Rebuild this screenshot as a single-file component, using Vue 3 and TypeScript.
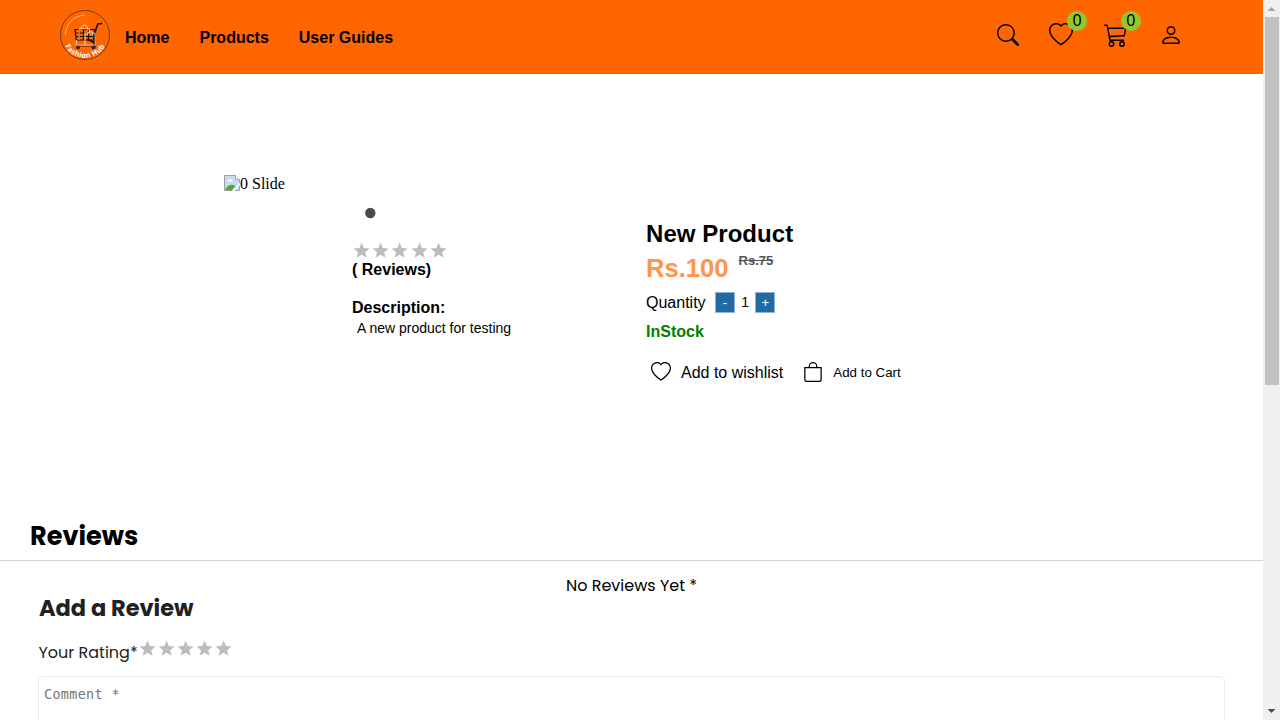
<script setup lang="ts">
import { ref } from 'vue'

const links: string[] = ['Home', 'Products', 'User Guides']
const stars: number[] = [1, 2, 3, 4, 5]
const quantity = ref(1)

const starPath = 'M12 17.27L18.18 21l-1.64-7.03L22 9.24l-7.19-.61L12 2 9.19 8.63 2 9.24l5.46 4.73L5.82 21z'
const heartPath = 'm8 2.748-.717-.737C5.6.281 2.514.878 1.4 3.053c-.523 1.023-.641 2.5.314 4.385.92 1.815 2.834 3.989 6.286 6.357 3.452-2.368 5.365-4.542 6.286-6.357.955-1.886.838-3.362.314-4.385C13.486.878 10.4.28 8.717 2.01L8 2.748zM8 15C-7.333 4.868 3.279-3.04 7.824 1.143c.06.055.119.112.176.171a3.12 3.12 0 0 1 .176-.17C12.72-3.042 23.333 4.867 8 15z'
const searchPath = 'M11.742 10.344a6.5 6.5 0 1 0-1.397 1.398h-.001c.03.04.062.078.098.115l3.85 3.85a1 1 0 0 0 1.415-1.414l-3.85-3.85a1.007 1.007 0 0 0-.115-.1zM12 6.5a5.5 5.5 0 1 1-11 0 5.5 5.5 0 0 1 11 0z'
const cartPath = 'M0 1.5A.5.5 0 0 1 .5 1H2a.5.5 0 0 1 .485.379L2.89 3H14.5a.5.5 0 0 1 .49.598l-1 5a.5.5 0 0 1-.465.401l-9.397.472L4.415 11H13a.5.5 0 0 1 0 1H4a.5.5 0 0 1-.491-.408L2.01 3.607 1.61 2H.5a.5.5 0 0 1-.5-.5zM3.102 4l.84 4.479 9.144-.459L13.89 4H3.102zM5 12a2 2 0 1 0 0 4 2 2 0 0 0 0-4zm7 0a2 2 0 1 0 0 4 2 2 0 0 0 0-4zm-7 1a1 1 0 1 1 0 2 1 1 0 0 1 0-2zm7 0a1 1 0 1 1 0 2 1 1 0 0 1 0-2z'
const personPath = 'M8 8a3 3 0 1 0 0-6 3 3 0 0 0 0 6zm2-3a2 2 0 1 1-4 0 2 2 0 0 1 4 0zm4 8c0 1-1 1-1 1H3s-1 0-1-1 1-4 6-4 6 3 6 4zm-1-.004c-.001-.246-.154-.986-.832-1.664C11.516 10.68 10.289 10 8 10c-2.29 0-3.516.68-4.168 1.332-.678.678-.83 1.418-.832 1.664h10z'
const bagPath = 'M8 1a2.5 2.5 0 0 1 2.5 2.5V4h-5v-.5A2.5 2.5 0 0 1 8 1zm3.5 3v-.5a3.5 3.5 0 1 0-7 0V4H1v10a2 2 0 0 0 2 2h10a2 2 0 0 0 2-2V4h-3.5zM2 5h12v9a1 1 0 0 1-1 1H3a1 1 0 0 1-1-1V5z'
</script>

<template>
  <div class="window">
    <div class="page">
      <header class="header">
        <svg class="logo" viewBox="0 0 50 50">
          <defs><path id="logoArc" d="M2.8 30A22.7 22.7 0 0 0 47.2 30" /></defs>
          <circle cx="25" cy="25" r="24.5" fill="none" stroke="#5a3a20" stroke-width=".9" />
          <path d="M5.4 25A19.8 19.8 0 0 1 24.5 5.2" fill="none" stroke="#ffc9a0" stroke-width=".8" />
          <g fill="none" stroke="#1c0e06">
            <path d="M42.3 13.5L37.8 14L35.5 20.5L34.6 34L31 30" stroke-width="1.6" />
            <path d="M15 19.5H34.5L33.5 30H16.2ZM15.5 23H33M16 26.5H33M19.5 19.5V30M23.5 19.5V30M28.5 19.5V30" stroke-width="1.2" />
            <path d="M27 29.5L33.5 32" stroke-width="1.8" />
            <path d="M16.5 36H36" stroke-width=".9" />
          </g>
          <g fill="none" stroke="#ffeadb" stroke-width=".8">
            <path d="M16.5 30V35.2H35.2V23H25V35M19.2 18.5V30M19.2 18.8H29.5V23" />
            <path d="M21 20C21 13.5 28 13.5 28 20M27.5 25C27.5 19.8 32.5 19.8 32.5 25" />
          </g>
          <circle cx="18" cy="37.4" r="2" fill="#4a2108" />
          <circle cx="33.5" cy="37.4" r="2" fill="#4a2108" />
          <text class="logo-text"><textPath href="#logoArc" startOffset="50%" text-anchor="middle">Fashion Hub</textPath></text>
        </svg>
        <nav class="nav"><a v-for="l in links" :key="l">{{ l }}</a></nav>
        <div class="tools">
          <svg class="search" viewBox="0 0 16 16"><path :d="searchPath" /></svg>
          <span class="tool wish"><svg viewBox="0 0 16 16"><path :d="heartPath" /></svg><b class="badge">0</b></span>
          <span class="tool cart"><svg viewBox="0 0 16 16"><path :d="cartPath" /></svg><b class="badge">0</b></span>
          <span class="tool user"><svg viewBox="0 0 16 16"><path :d="personPath" /></svg></span>
        </div>
      </header>

      <section class="product">
        <div class="media">
          <div class="slide">
            <svg viewBox="0 0 16 16">
              <path d="M.5 .5H11.5L15.5 4.5V15.5H.5Z" fill="#c6d9f5" stroke="#a0a0a0" />
              <path d="M11.5 .5V4.5H15.5" fill="#fff" stroke="#a0a0a0" />
              <path d="M3 6.5C3 4.5 5 4.5 5.3 5C6 3.3 8 4.2 7.7 5.3C9 5.3 9 6.5 8.5 6.5Z" fill="#fff" />
              <path d="M1 15C3 10.5 7 8 11.5 11L8 15Z" fill="#4faa35" />
              <path d="M8 16L16 7.5V10L10.5 16Z" fill="#fff" />
            </svg><span>0 Slide</span>
          </div>
          <svg class="dot" viewBox="0 0 12 12"><circle cx="6.3" cy="6" r="5.2" fill="#4a4a4a" /></svg>
          <div class="details">
            <div class="stars"><svg v-for="s in stars" :key="s" viewBox="0 0 24 24"><path :d="starPath" /></svg></div>
            <h4 class="count">( Reviews)</h4>
            <h4 class="label">Description:</h4>
            <p class="description">A new product for testing</p>
          </div>
        </div>

        <div class="info">
          <h2>New Product</h2>
          <div class="prices"><strong>Rs.100</strong><s>Rs.75</s></div>
          <div class="quantity">
            <span>Quantity</span>
            <button @click="quantity = Math.max(1, quantity - 1)">-</button>
            <em>{{ quantity }}</em>
            <button @click="quantity++">+</button>
          </div>
          <div class="stock">InStock</div>
          <div class="actions">
            <svg viewBox="0 0 16 16"><path :d="heartPath" /></svg><span class="add-wish">Add to wishlist</span>
            <svg viewBox="0 0 16 16"><path :d="bagPath" /></svg><span class="add-cart">Add to Cart</span>
          </div>
        </div>
      </section>

      <section class="reviews">
        <h2 class="reviews-title">Reviews</h2>
        <p class="empty">No Reviews Yet *</p>
        <h3 class="add-title">Add a Review</h3>
        <div class="rating">
          <span>Your Rating*</span>
          <div class="stars"><svg v-for="s in stars" :key="s" viewBox="0 0 24 24"><path :d="starPath" /></svg></div>
        </div>
        <textarea placeholder="Comment *"></textarea>
      </section>
    </div>

    <aside class="scrollbar">
      <svg class="arrow" viewBox="0 0 17 17"><path d="M4.5 11L8.5 7L12.5 11Z" fill="#a3a3a3" /></svg>
      <div class="thumb"></div>
      <svg class="arrow" viewBox="0 0 17 17"><path d="M4.5 6L8.5 10L12.5 6Z" fill="#505050" /></svg>
    </aside>
  </div>
</template>

<style>
body { margin: 0; overflow: hidden; background: #fff; }
</style>

<style scoped>
* { box-sizing: border-box; }
h2, h3, h4, p { margin: 0; }
svg { display: block; flex: none; }
.window { display: flex; width: 1280px; height: 720px; overflow: hidden; font-family: "Liberation Sans", Arial, sans-serif; color: #000; }
.page { width: 1263px; height: 720px; overflow: hidden; }
.header { display: flex; height: 74px; padding-left: 60px; background: #ff6600; }
.logo { width: 50px; height: 50px; margin-top: 10px; }
.logo-text { font: bold 7.3px "Open Sans", sans-serif; fill: #fff; letter-spacing: .3px; }
.nav { display: flex; gap: 30px; margin-left: 15px; font-size: 16px; font-weight: bold; line-height: 75px; }
.tools { display: flex; margin-left: auto; margin-right: 80px; }
.search { width: 22px; height: 22px; margin: 24px 30.5px 0 0; }
.tool { position: relative; width: 24px; height: 24px; margin-top: 22.5px; }
.tool svg { width: 24px; height: 24px; }
.wish { margin-right: 30.5px; }
.cart { margin-right: 31.5px; margin-top: 23px; }
.user { margin-top: 23px; }
.badge { position: absolute; left: 18px; top: -12px; width: 20px; height: 20px; border-radius: 50%; background: #93c72f; font: 16px/18px "Noto Sans", sans-serif; text-align: center; }
.cart .badge { left: 17.4px; }

.product { display: flex; height: 446px; padding-left: 224px; }
.media { width: 422px; padding-top: 101px; }
.slide { display: flex; height: 18px; font: 16px/18px "Liberation Serif", serif; }
.slide svg { width: 16px; height: 16px; }
.dot { width: 12px; height: 12px; margin: 14px 0 0 140px; }
.details { margin: 22px 0 0 128px; }
.stars { display: flex; height: 19px; }
.stars svg { width: 19.2px; height: 19.2px; fill: #bdbdbd; }
.count, .label { font-size: 16px; line-height: 19px; }
.label { margin-top: 19px; }
.description { padding-left: 5px; font-size: 14px; line-height: 22px; }

.info { padding-top: 145px; }
.info h2 { font-size: 24px; line-height: 30px; letter-spacing: .05px; }
.prices { display: flex; height: 36px; }
.prices strong { font-size: 25.6px; line-height: 39px; color: #ff944d; }
.prices s { margin-left: 10px; font-size: 13px; font-weight: bold; line-height: 24px; color: #555; }
.quantity { display: flex; align-items: center; height: 34px; font-size: 16px; }
.quantity span { width: 69px; line-height: 20px; margin-top: 1px; }
.quantity button { width: 20px; height: 21px; padding: 0; border: 1px solid #8fb4d2; background: #216ba5; color: #fff; font: 13.3px "Liberation Sans", sans-serif; }
.quantity em { width: 20.4px; text-align: center; font-size: 14px; font-style: normal; }
.stock { margin-top: 1px; font-size: 16px; font-weight: bold; line-height: 24px; color: green; }
.actions { display: flex; align-items: center; margin-top: 18px; padding-left: 5px; height: 20px; }
.actions svg { width: 20px; height: 20px; }
.add-wish { margin: 1px 20px 0 10px; font-size: 16px; line-height: 20px; }
.add-cart { margin-left: 10px; font-size: 13.33px; }

.reviews { font-family: Poppins, Inter, sans-serif; }
.reviews-title { height: 41px; padding-left: 30px; border-bottom: 1px solid #d3d3d3; font-size: 25.6px; line-height: 33px; }
.empty { margin-top: 14px; text-align: center; font-size: 16px; line-height: 21px; }
.add-title { padding-left: 39px; font-size: 22.5px; line-height: 24px; color: #212121; }
.rating { display: flex; height: 56px; padding-left: 38.5px; color: #212121; font-size: 16px; line-height: 66px; }
.rating span { width: 99px; white-space: nowrap; }
.rating .stars { margin-top: 18.6px; }
textarea { display: block; width: 1187px; height: 100px; margin-left: 38px; padding: 9px 5px; border: 1px solid #ebebeb; border-radius: 5px; resize: none; font: 13.33px/17px "DejaVu Sans Mono", monospace; letter-spacing: .4px; }
textarea::placeholder { color: #757575; }

.scrollbar { display: flex; flex-direction: column; width: 17px; height: 720px; background: #f0f0f0; }
.arrow { width: 17px; height: 17px; }
.thumb { width: 14px; height: 368px; margin: 0 1px 318px 2px; background: #c1c1c1; }
</style>
